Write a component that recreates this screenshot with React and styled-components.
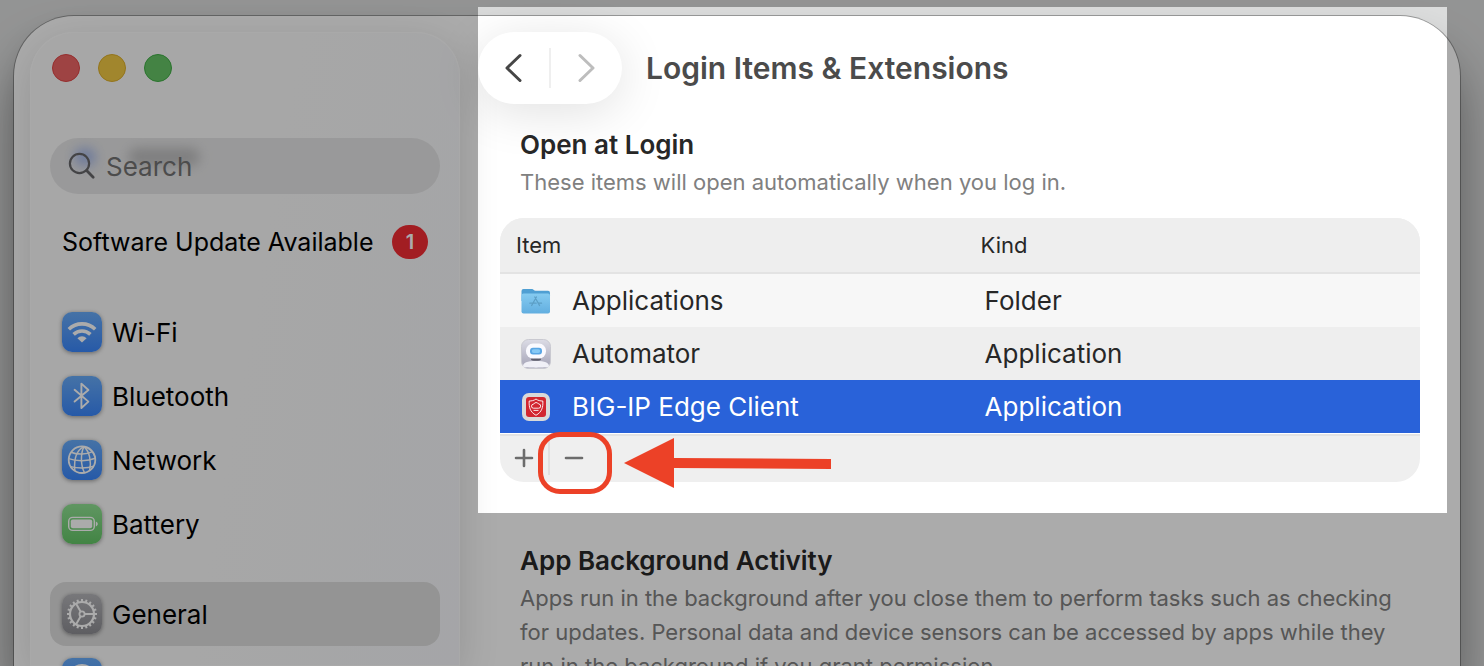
import styled, { createGlobalStyle, css } from "styled-components";

const GlobalStyle = createGlobalStyle`
  * {
    box-sizing: border-box;
  }
  body {
    margin: 0;
    font-family: Inter, "Liberation Sans", sans-serif;
    color: #272727;
  }
  button,
  input {
    font: inherit;
    color: inherit;
    border: none;
    padding: 0;
    background: none;
  }
  h1, h2, p, ul {
    margin: 0;
    padding: 0;
  }
  svg {
    display: block;
  }
`;

const Desktop = styled.div`
  position: relative;
  height: 100vh;
  overflow: hidden;
  padding: 16px 24px 0 14px;
  background: #dcdddd;
`;

const Window = styled.div`
  display: flex;
  height: 100%;
  padding: 16px 0 0 16px;
  border-radius: 60px 60px 0 0;
  background: #ffffff;
  box-shadow: 0 0 0 1px rgba(0, 0, 0, 0.3), 0 36px 50px rgba(0, 0, 0, 0.4);
`;

/* sidebar */

const Sidebar = styled.aside`
  flex: none;
  width: 430px;
  padding: 22px 20px 0;
  border-radius: 44px 44px 0 0;
  background: linear-gradient(100deg, #f9f9f9 50%, #f6f7fb);
  box-shadow: inset 0 0 0 1px #fdfdfd, 0 10px 40px rgba(0, 0, 0, 0.14);
`;

const Lights = styled.div`
  display: flex;
  gap: 18px;
  padding-left: 2px;
  margin-bottom: 56px;
`;

const Light = styled.button`
  width: 28px;
  height: 28px;
  border-radius: 50%;
  background: ${(props) => props.$color};
  border: 1px solid ${(props) => props.$edge};
`;

const SearchBox = styled.label`
  position: relative;
  display: flex;
  align-items: center;
  gap: 10px;
  height: 56px;
  padding: 0 18px;
  border-radius: 28px;
  background: #e5e5e6;
  overflow: hidden;
  color: #666669;
  font-size: 26px;

  svg,
  input {
    position: relative;
  }
  svg {
    flex: none;
  }
  input {
    flex: 1;
    min-width: 0;
    outline: none;
  }
  input::placeholder {
    color: #727272;
    opacity: 1;
  }
`;

const Smudge = styled.i`
  position: absolute;
  left: ${(props) => props.$left};
  top: 10px;
  width: ${(props) => props.$width};
  height: 18px;
  border-radius: 9px;
  background: ${(props) => props.$color};
  filter: blur(6px);
`;

const NavList = styled.ul`
  list-style: none;
  margin-top: ${(props) => props.$gap};
`;

const NavItem = styled.button`
  display: flex;
  align-items: center;
  gap: 10px;
  width: 100%;
  height: 64px;
  padding: 0 12px;
  border-radius: 16px;
  font-size: 26px;
  color: #000000;
  text-align: left;
  white-space: nowrap;
  ${(props) =>
    props.$active &&
    css`
      background: #dddddd;
    `}
`;

const UpdateItem = styled(NavItem)`
  font-size: 25px;
`;

const Badge = styled.span`
  display: grid;
  place-items: center;
  width: 36px;
  height: 34px;
  margin-left: auto;
  border-radius: 17px;
  background: #f22c33;
  color: #ffffff;
  font-size: 20px;
  font-weight: 600;
`;

const tileColors = {
  blue: "linear-gradient(#68abf8, #3a86fb)",
  green: "linear-gradient(#8fe092, #63c566)",
  gray: "linear-gradient(#b3b3b7, #8c8c92)",
};

const Tile = styled.span`
  display: grid;
  place-items: center;
  width: 40px;
  height: 40px;
  border-radius: 10px;
  background: ${(props) => tileColors[props.$tone]};
  box-shadow: 0 1px 4px rgba(0, 0, 0, 0.4);
`;

/* content */

const Content = styled.main`
  flex: 1;
  min-width: 0;
`;

const Toolbar = styled.header`
  display: flex;
  align-items: center;
  gap: 24px;
  padding-left: 18px;
`;

const Pager = styled.div`
  display: flex;
  align-items: center;
  width: 144px;
  height: 72px;
  border-radius: 36px;
  background: #ffffff;
  box-shadow: 0 8px 50px rgba(0, 0, 0, 0.12);
`;

const PagerButton = styled.button`
  flex: 1;
  display: grid;
  place-items: center;
  height: 100%;
  color: ${(props) => (props.disabled ? "#bdbdbd" : "#464646")};
`;

const Divider = styled.span`
  width: 2px;
  height: ${(props) => props.$height};
  background: ${(props) => props.$color};
`;

const Title = styled.h1`
  font-size: 30px;
  line-height: 36px;
  font-weight: 600;
  color: #4b4b4b;
`;

const Section = styled.section`
  padding: 0 40px;
  margin-top: ${(props) => props.$gap};
`;

const Heading = styled.h2`
  padding-left: 20px;
  font-size: 26px;
  line-height: 34px;
  font-weight: 600;
`;

const Description = styled.p`
  padding: 0 20px;
  margin-top: 3px;
  font-size: 22px;
  line-height: 34px;
  color: #808080;
`;

const ListArea = styled.div`
  position: relative;
  margin-top: 19px;
`;

const List = styled.div`
  overflow: hidden;
  border-radius: 24px;
  background: #efefef;
`;

const Table = styled.table`
  width: 100%;
  table-layout: fixed;
  border-spacing: 0;
`;

const HeadCell = styled.th`
  width: ${(props) => props.$width};
  height: 56px;
  padding: 0 16px;
  border-bottom: 2px solid #e3e3e3;
  background: #eeeeee;
  font-size: 22px;
  font-weight: 400;
  text-align: left;
`;

const Row = styled.tr`
  background: #eeeeee;
  &:nth-child(odd) {
    background: #f7f7f7;
  }
  &[aria-selected="true"] {
    background: #2962d9;
    color: #ffffff;
  }
`;

const Cell = styled.td`
  height: 53px;
  padding: 0 20px;
  font-size: 26px;
`;

const ItemName = styled.span`
  display: flex;
  align-items: center;
  gap: 20px;
`;

const ListFooter = styled.div`
  display: flex;
  align-items: center;
  height: 49px;
  border-top: 1px solid #ffffff;
  box-shadow: inset 0 2px #e3e3e3;
`;

const ListButton = styled.button`
  display: grid;
  place-items: center;
  width: 48px;
  height: 46px;
  color: #6c6c6c;
`;

const Ring = styled.div`
  position: absolute;
  left: 38px;
  bottom: -12px;
  width: 74px;
  height: 62px;
  border: 5px solid #ec4127;
  border-radius: 22px;
  pointer-events: none;
`;

const Arrow = styled.svg`
  position: absolute;
  left: 124px;
  bottom: -6px;
  pointer-events: none;
`;

/* everything outside of the spotlight is darkened by its shadow */
const Spotlight = styled.div`
  position: absolute;
  top: 7px;
  left: 478px;
  right: 37px;
  height: 506px;
  box-shadow: 0 0 0 3000px rgba(0, 0, 0, 0.33);
  pointer-events: none;
`;

const strokeProps = {
  fill: "none",
  stroke: "currentColor",
  strokeLinecap: "round",
  strokeLinejoin: "round",
};

function WifiIcon() {
  return (
    <svg width="40" height="40" viewBox="0 0 40 40" fill="none" stroke="#fff">
      <path d="M6.8 17.2a19 19 0 0 1 26.4 0" strokeWidth="3.6" />
      <path d="M11.6 22.4a12.2 12.2 0 0 1 16.8 0" strokeWidth="3.6" />
      <path
        d="M20 30.6l-4.6-4.4a6.6 6.6 0 0 1 9.2 0z"
        fill="#fff"
        stroke="none"
      />
    </svg>
  );
}

function BluetoothIcon() {
  return (
    <svg width="40" height="40" viewBox="0 0 40 40" fill="none" stroke="#fff">
      <path
        d="M12.6 13.8L26.4 25.6L19.4 32V7.6L26.4 14L12.6 25.6"
        strokeWidth="1.9"
        strokeLinecap="round"
        strokeLinejoin="round"
      />
    </svg>
  );
}

function NetworkIcon() {
  return (
    <svg width="40" height="40" viewBox="0 0 40 40" fill="none" stroke="#fff">
      <circle cx="20" cy="19.7" r="13.3" strokeWidth="1.8" />
      <g strokeWidth="1.5">
        <path d="M22 6.6C15 10 11.6 17.5 12.8 30.8" />
        <path d="M22 6.6C18.6 13 18.4 25 22.5 32.7" />
        <path d="M22 6.6C27.5 11.5 29.6 21 27.6 30.6" />
        <path d="M22 6.6C27 8 31.5 12 33 17" />
        <path d="M9.2 12.2C15 15 25 14.5 30.6 11.6" />
        <path d="M6.8 18.6C14 21.4 26 21.4 33.2 18.2" />
        <path d="M8.5 26.6C15 28.5 25 28.7 31.5 26.3" />
      </g>
    </svg>
  );
}

function BatteryIcon() {
  return (
    <svg width="40" height="40" viewBox="0 0 40 40">
      <rect
        x="6.7"
        y="13.4"
        width="25.6"
        height="13"
        rx="4"
        fill="none"
        stroke="#fff"
        strokeWidth="1.4"
      />
      <rect x="8.8" y="15.5" width="21.4" height="8.8" rx="2" fill="#fff" />
      <path d="M33.8 17.6c2.6.8 2.6 4 0 4.8z" fill="#fff" />
    </svg>
  );
}

function GearIcon() {
  const teeth = Array.from({ length: 20 }, (_, i) => i * 18);
  return (
    <svg width="40" height="40" viewBox="0 0 40 40" fill="none" stroke="#fff">
      <circle cx="20" cy="20" r="12" strokeWidth="2.2" />
      {teeth.map((angle) => (
        <path
          key={angle}
          d="M20 5v3"
          strokeWidth="2"
          transform={`rotate(${angle} 20 20)`}
        />
      ))}
      <circle cx="20" cy="20" r="2.6" strokeWidth="1.8" />
      <path
        d="M22.6 20h9.4M18.7 17.7l-4.7-8.1M18.7 22.3l-4.7 8.1"
        strokeWidth="2"
      />
    </svg>
  );
}

function AccessibilityIcon() {
  return (
    <svg width="40" height="40" viewBox="0 0 40 40" fill="none" stroke="#fff">
      <circle cx="20" cy="20" r="13" strokeWidth="2" />
      <circle cx="20" cy="13.5" r="2" fill="#fff" stroke="none" />
      <path d="M13 17.5l7 1.5 7-1.5M20 19v4l-3 6M20 23l3 6" strokeWidth="2" />
    </svg>
  );
}

function FolderIcon() {
  return (
    <svg width="32" height="32" viewBox="0 0 32 32">
      <defs>
        <linearGradient id="folder" x1="0" y1="0" x2="0" y2="1">
          <stop offset="0" stopColor="#85cbf0" />
          <stop offset="1" stopColor="#62aee0" />
        </linearGradient>
      </defs>
      <path
        d="M1.5 6a2 2 0 0 1 2-2H12c1.5 0 2 1.8 3.5 1.8H28a2 2 0 0 1 2 2V16H1.5z"
        fill="#4f9fd3"
      />
      <rect x="1.5" y="8.6" width="28.5" height="19.8" rx="2" fill="url(#folder)" />
      <path
        d="M14.8 12l4.8 8.6M16.4 12l-4.8 8.6M9.8 18.2h6.4M18.6 18.2h3"
        stroke="#5c9fc6"
        strokeWidth="1.2"
        strokeLinecap="round"
      />
    </svg>
  );
}

function AutomatorIcon() {
  return (
    <svg width="32" height="32" viewBox="0 0 32 32">
      <defs>
        <linearGradient id="robot" x1="0" y1="0" x2="0" y2="1">
          <stop offset="0" stopColor="#dcdce6" />
          <stop offset="1" stopColor="#a3a2b5" />
        </linearGradient>
      </defs>
      <rect x="1.5" y="1.5" width="29" height="29" rx="7" fill="url(#robot)" stroke="#c9c9d0" />
      <ellipse cx="16" cy="21.3" rx="5" ry="1.5" fill="#5d5d6b" />
      <rect x="6" y="5.6" width="20" height="15" rx="7" fill="#fafaff" />
      <rect x="10" y="9.8" width="12" height="6.6" rx="3" fill="#5aa6e4" />
      <rect x="11.8" y="11.2" width="8.4" height="3.8" rx="1.9" fill="#86c9f5" />
      <path d="M3 28.5c0-4 4-5.5 13-5.5s13 1.5 13 5.5c-1 1.5-25 1.5-26 0z" fill="#f0f0f7" />
    </svg>
  );
}

function EdgeClientIcon() {
  return (
    <svg width="32" height="32" viewBox="0 0 32 32">
      <rect x="2" y="2" width="28" height="28" rx="7" fill="#d9d9d9" />
      <rect x="6" y="6" width="20" height="20" rx="3" fill="#d22630" />
      <g fill="none" stroke="#fff" strokeWidth="0.9">
        <path d="M16 8c2 1.6 4.5 2 6.8 2 .4 6-.8 11-6.8 14.3C10 21 8.8 16 9.2 10c2.3 0 4.800-.4 6.800-2z" />
        <path d="M13.4 17.2a2 2 0 0 1 .2-4 2.8 2.8 0 0 1 5-.2 2.1 2.1 0 0 1 0 4.2zM13.5 19.4h5" />
      </g>
    </svg>
  );
}

const networkItems = [
  { label: "Wi-Fi", tone: "blue", icon: <WifiIcon /> },
  { label: "Bluetooth", tone: "blue", icon: <BluetoothIcon /> },
  { label: "Network", tone: "blue", icon: <NetworkIcon /> },
  { label: "Battery", tone: "green", icon: <BatteryIcon /> },
];

const generalItems = [
  { label: "General", tone: "gray", icon: <GearIcon />, active: true },
  { label: "", tone: "blue", icon: <AccessibilityIcon /> },
];

const loginItems = [
  { name: "Applications", kind: "Folder", icon: <FolderIcon /> },
  { name: "Automator", kind: "Application", icon: <AutomatorIcon /> },
  {
    name: "BIG-IP Edge Client",
    kind: "Application",
    icon: <EdgeClientIcon />,
    selected: true,
  },
];

function NavGroup({ items }) {
  return (
    <NavList $gap="26px">
      {items.map((item) => (
        <li key={item.label}>
          <NavItem $active={item.active}>
            <Tile $tone={item.tone}>{item.icon}</Tile>
            {item.label}
          </NavItem>
        </li>
      ))}
    </NavList>
  );
}

function SettingsSidebar() {
  return (
    <Sidebar>
      <Lights>
        <Light aria-label="Close" $color="#ec6464" $edge="#df4545" />
        <Light aria-label="Minimize" $color="#f0c843" $edge="#dcae2c" />
        <Light aria-label="Zoom" $color="#66c466" $edge="#3fae45" />
      </Lights>
      <SearchBox>
        <Smudge $left="24px" $width="22px" $color="#a3b6e6" />
        <Smudge $left="78px" $width="72px" $color="#bcbcbd" />
        <svg width="28" height="28" viewBox="0 0 28 28" {...strokeProps}>
          <circle cx="11.5" cy="11.5" r="9.6" strokeWidth="2.2" />
          <path d="M18.6 18.6l6.6 6.6" strokeWidth="2.8" />
        </svg>
        <input type="text" aria-label="Search" placeholder="Search" />
      </SearchBox>
      <NavList $gap="16px">
        <li>
          <UpdateItem>
            Software Update Available
            <Badge>1</Badge>
          </UpdateItem>
        </li>
      </NavList>
      <NavGroup items={networkItems} />
      <NavGroup items={generalItems} />
    </Sidebar>
  );
}

function LoginItemsList() {
  return (
    <ListArea>
      <List>
        <Table>
          <thead>
            <tr>
              <HeadCell $width="50.5%">Item</HeadCell>
              <HeadCell>Kind</HeadCell>
            </tr>
          </thead>
          <tbody>
            {loginItems.map((item) => (
              <Row key={item.name} aria-selected={!!item.selected}>
                <Cell>
                  <ItemName>
                    {item.icon}
                    {item.name}
                  </ItemName>
                </Cell>
                <Cell>{item.kind}</Cell>
              </Row>
            ))}
          </tbody>
        </Table>
        <ListFooter>
          <ListButton aria-label="Add">
            <svg width="20" height="20" viewBox="0 0 20 20" {...strokeProps}>
              <path d="M10 2v16M2 10h16" strokeWidth="2.6" />
            </svg>
          </ListButton>
          <Divider $height="34px" $color="#e0e0e0" />
          <ListButton aria-label="Remove">
            <svg width="20" height="20" viewBox="0 0 20 20" {...strokeProps}>
              <path d="M2 10h16" strokeWidth="2.6" />
            </svg>
          </ListButton>
        </ListFooter>
      </List>
      <Ring />
      <Arrow width="208" height="50" viewBox="0 0 208 50" fill="#ec4127">
        <path d="M0 25L50 0v20l157 1v10l-157-1v20z" />
      </Arrow>
    </ListArea>
  );
}

function App() {
  return (
    <Desktop>
      <GlobalStyle />
      <Window>
        <SettingsSidebar />
        <Content>
          <Toolbar>
            <Pager>
              <PagerButton aria-label="Back">
                <svg width="18" height="30" viewBox="0 0 18 30" {...strokeProps}>
                  <path d="M15 2.5L2 15l13 12.5" strokeWidth="3" />
                </svg>
              </PagerButton>
              <Divider $height="40px" $color="#efefef" />
              <PagerButton aria-label="Forward" disabled>
                <svg width="18" height="30" viewBox="0 0 18 30" {...strokeProps}>
                  <path d="M2 2.5L15 15L2 27.5" strokeWidth="3" />
                </svg>
              </PagerButton>
            </Pager>
            <Title>Login Items &amp; Extensions</Title>
          </Toolbar>
          <Section $gap="24px">
            <Heading>Open at Login</Heading>
            <Description>
              These items will open automatically when you log in.
            </Description>
            <LoginItemsList />
          </Section>
          <Section $gap="62px">
            <Heading>App Background Activity</Heading>
            <Description>
              Apps run in the background after you close them to perform tasks
              such as checking for updates. Personal data and device sensors can
              be accessed by apps while they run in the background if you grant
              permission.
            </Description>
          </Section>
        </Content>
      </Window>
      <Spotlight />
    </Desktop>
  );
}

export default App;
